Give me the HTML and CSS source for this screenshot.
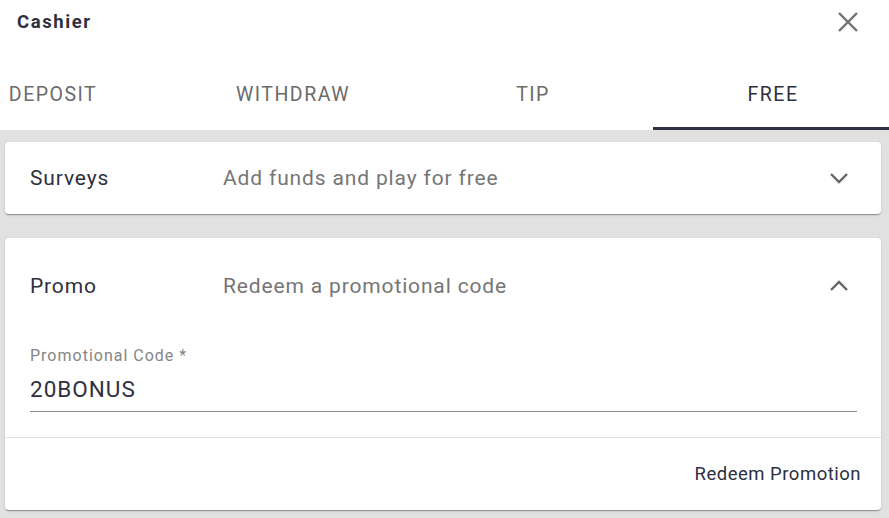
FILE: index.html
```html
<!DOCTYPE html>
<html>
<head>
<meta charset="utf-8">
<link rel="stylesheet" href="styles.css">
</head>
<body>
<div class="dialog">
  <header class="top">
    <h1 class="title">Cashier</h1>
    <button class="close" aria-label="Close">
      <svg width="24" height="24" viewBox="0 0 24 24"><path d="M3 3L21 21M21 3L3 21" stroke="#707070" stroke-width="2.4" fill="none"/></svg>
    </button>
  </header>
  <nav class="tabs-wrap">
    <div class="tabs">
      <div class="tab">DEPOSIT</div>
      <div class="tab">WITHDRAW</div>
      <div class="tab">TIP</div>
      <div class="tab active">FREE</div>
    </div>
  </nav>
  <main class="content">
    <section class="card">
      <div class="row">
        <span class="row-title">Surveys</span>
        <span class="row-desc">Add funds and play for free</span>
        <svg class="chev" width="20" height="12" viewBox="0 0 20 12"><path d="M2 2L10 10L18 2" stroke="#666" stroke-width="2.4" fill="none"/></svg>
      </div>
    </section>
    <section class="card expanded">
      <div class="row row-open">
        <span class="row-title">Promo</span>
        <span class="row-desc">Redeem a promotional code</span>
        <svg class="chev" width="20" height="12" viewBox="0 0 20 12"><path d="M2 10L10 2L18 10" stroke="#666" stroke-width="2.4" fill="none"/></svg>
      </div>
      <div class="field">
        <label class="field-label">Promotional Code *</label>
        <div class="field-input">20BONUS</div>
      </div>
      <div class="actions">
        <button class="btn">Redeem Promotion</button>
      </div>
    </section>
  </main>
</div>
</body>
</html>
```

FILE: styles.css
```css
* { box-sizing: border-box; }
html, body { margin: 0; padding: 0; }
body {
  width: 889px;
  height: 518px;
  overflow: hidden;
  font-family: Roboto, "Liberation Sans", sans-serif;
  background: #e1e1e1;
}
.dialog { width: 889px; }
.top {
  height: 65px;
  background: #fff;
  display: flex;
  align-items: flex-start;
  justify-content: space-between;
}
.title {
  margin: 11px 0 0 17px;
  font-size: 18.5px;
  font-weight: 700;
  letter-spacing: 1.6px;
  color: #2e3040;
}
.close {
  margin: 10px 29px 0 0;
  padding: 0;
  border: 0;
  background: none;
  width: 24px;
  height: 24px;
}
.tabs-wrap {
  height: 65px;
  background: #fff;
  overflow: hidden;
}
.tabs {
  display: flex;
  margin-left: -67px;
  height: 65px;
}
.tab {
  flex: 0 0 240px;
  display: flex;
  align-items: center;
  justify-content: center;
  padding-bottom: 4px;
  font-size: 19.5px;
  letter-spacing: 1.5px;
  color: #6b6b6b;
  border-bottom: 3px solid transparent;
}
.tab.active {
  color: #2e3040;
  border-bottom-color: #2e3142;
}
.content {
  padding: 12px 8px 0 5px;
  display: flex;
  flex-direction: column;
  gap: 24px;
}
.card {
  background: #fff;
  border-radius: 4px;
  box-shadow: 0 2px 1px -1px rgba(0,0,0,0.2), 0 1px 1px 0 rgba(0,0,0,0.14), 0 1px 3px 0 rgba(0,0,0,0.12);
}
.row {
  height: 72px;
  display: flex;
  align-items: center;
  padding: 0 32px 0 25px;
  font-size: 21px;
  letter-spacing: 0.85px;
}
.row-open { height: 96px; }
.row-title {
  flex: 0 0 193px;
  color: #2e3040;
}
.row-desc {
  flex: 1;
  color: #767676;
}
.field {
  padding: 12px 24px 0 25px;
}
.field-label {
  display: block;
  font-size: 16px;
  letter-spacing: 1px;
  color: #858585;
  line-height: 20px;
}
.field-input {
  font-size: 22.5px;
  letter-spacing: 1px;
  color: #2e3040;
  line-height: 30px;
  padding: 8px 0 7px;
  border-bottom: 1px solid #8a8a8a;
}
.actions {
  margin-top: 25px;
  border-top: 1px solid #e0e0e0;
  height: 73px;
  display: flex;
  align-items: center;
  justify-content: flex-end;
  padding-right: 20px;
}
.btn {
  border: 0;
  background: none;
  padding: 0;
  font-family: Roboto, "Liberation Sans", sans-serif;
  font-size: 18.5px;
  letter-spacing: 0.5px;
  color: #2e3040;
}
```
